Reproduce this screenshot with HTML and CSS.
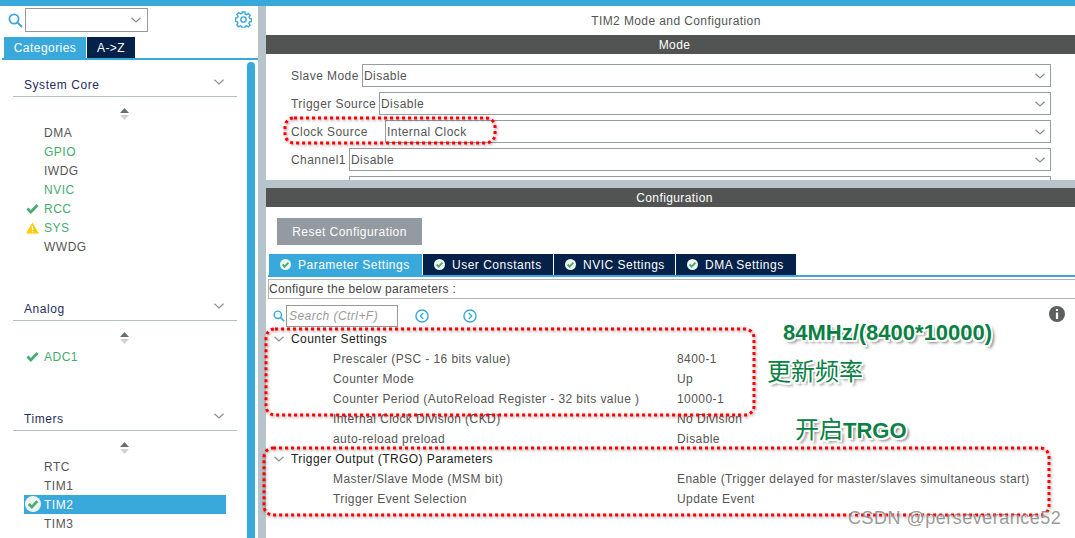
FILE: index.html
```html
<!DOCTYPE html>
<html lang="en">
<head>
<meta charset="utf-8">
<title>TIM2 Mode and Configuration</title>
<link rel="stylesheet" href="styles.css">
</head>
<body>
<svg class="defs" width="0" height="0" aria-hidden="true">
  <symbol id="chev" viewBox="0 0 10 6"><path d="M.5.8 5 5 9.500.8" fill="none" stroke="#8b8f92" stroke-width="1.200"/></symbol>
  <symbol id="check" viewBox="0 0 14 12"><path d="M1.500 6 5.200 9.800 12.500 2.200" fill="none" stroke="#45ad6e" stroke-width="3"/></symbol>
  <symbol id="okc" viewBox="0 0 12 12"><circle cx="6" cy="6" r="6" fill="#eef5f0"/><path d="M2.800 6 5.100 8.300 9.200 3.900" fill="none" stroke="#45ad6e" stroke-width="2"/></symbol>
  <symbol id="sort" viewBox="0 0 9 12"><path d="M4.500 0 9 5H0z" fill="#6b6f72"/><path d="M0 7h9L4.500 12z" fill="#cfd2d4"/></symbol>
  <symbol id="mag" viewBox="0 0 15 15"><circle cx="6" cy="6" r="4.600" fill="none" stroke="#39a9dc" stroke-width="1.800"/><path d="M9.500 9.500 14 14" stroke="#39a9dc" stroke-width="2"/></symbol>
</svg>
<div class="topbar"></div>
<main class="main">
  <aside class="left">
    <div class="searchrow">
      <svg class="mag"><use href="#mag"/></svg>
      <div class="combo"><svg class="chev"><use href="#chev"/></svg></div>
      <svg class="gear" viewBox="0 0 18 18"><path d="M7.600 1h2.800l.4 2.100 1.500.7 1.800-1.200 2 2-1.200 1.800.6 1.500 2 .5v2.800l-2 .4-.7 1.500 1.200 1.800-2 2-1.800-1.200-1.500.6-.4 2H7.600l-.4-2-1.500-.7-1.800 1.200-2-2 1.200-1.800-.6-1.500-2-.4V7.400l2-.4.700-1.500-1.200-1.800 2-2 1.800 1.200 1.500-.6z" fill="none" stroke="#39a9dc" stroke-width="1.500"/><circle cx="9" cy="9" r="2.800" fill="none" stroke="#39a9dc" stroke-width="1.500"/></svg>
    </div>
    <div class="ltabs">
      <div class="ltab ltab-on">Categories</div>
      <div class="ltab ltab-off">A-&gt;Z</div>
    </div>
    <div class="catbody">
      <div class="catlist">
        <section class="cat">
          <div class="cathead"><span>System Core</span><svg class="chev"><use href="#chev"/></svg></div>
          <div class="sortrow"><svg class="sort"><use href="#sort"/></svg></div>
          <div class="item">DMA</div>
          <div class="item ok">GPIO</div>
          <div class="item">IWDG</div>
          <div class="item ok">NVIC</div>
          <div class="item ok"><svg class="ic-check"><use href="#check"/></svg>RCC</div>
          <div class="item ok"><svg class="ic-warn" viewBox="0 0 14 12"><path d="M7 0 14 12H0z" fill="#fc0"/><path d="M6.300 3.500h1.400v4.800H6.300zM6.300 9.200h1.400v1.400H6.300z" fill="#fff"/></svg>SYS</div>
          <div class="item">WWDG</div>
        </section>
        <section class="cat">
          <div class="cathead"><span>Analog</span><svg class="chev"><use href="#chev"/></svg></div>
          <div class="sortrow"><svg class="sort"><use href="#sort"/></svg></div>
          <div class="item ok"><svg class="ic-check"><use href="#check"/></svg>ADC1</div>
        </section>
        <section class="cat">
          <div class="cathead"><span>Timers</span><svg class="chev"><use href="#chev"/></svg></div>
          <div class="sortrow"><svg class="sort"><use href="#sort"/></svg></div>
          <div class="item">RTC</div>
          <div class="item">TIM1</div>
          <div class="item sel"><svg class="ic-okc"><use href="#okc"/></svg>TIM2</div>
          <div class="item">TIM3</div>
          <div class="item">TIM4</div>
        </section>
      </div>
      <div class="vscroll"></div>
    </div>
  </aside>
  <div class="right">
    <section class="mode">
      <div class="title">TIM2 Mode and Configuration</div>
      <div class="bar">Mode</div>
      <div class="moderows">
        <div class="mrow"><label class="mlabel w-slave">Slave Mode</label><div class="msel">Disable<svg class="chev"><use href="#chev"/></svg></div></div>
        <div class="mrow"><label class="mlabel w-trig">Trigger Source</label><div class="msel">Disable<svg class="chev"><use href="#chev"/></svg></div></div>
        <div class="mrow"><label class="mlabel w-clock">Clock Source</label><div class="msel">Internal Clock<svg class="chev"><use href="#chev"/></svg></div></div>
        <div class="mrow"><label class="mlabel w-chan">Channel1</label><div class="msel">Disable<svg class="chev"><use href="#chev"/></svg></div></div>
        <div class="mrow"><label class="mlabel w-chan"></label><div class="msel"></div></div>
      </div>
    </section>
    <section class="config">
      <div class="bar">Configuration</div>
      <div class="resetwrap"><button class="reset">Reset Configuration</button></div>
      <div class="ctabs">
        <div class="ctab ctab-on t1"><svg class="ic-okc"><use href="#okc"/></svg>Parameter Settings</div>
        <div class="ctab t2"><svg class="ic-okc"><use href="#okc"/></svg>User Constants</div>
        <div class="ctab t3"><svg class="ic-okc"><use href="#okc"/></svg>NVIC Settings</div>
        <div class="ctab t4"><svg class="ic-okc"><use href="#okc"/></svg>DMA Settings</div>
      </div>
      <div class="hint">Configure the below parameters :</div>
      <div class="tools">
        <svg class="mag2"><use href="#mag"/></svg>
        <div class="psearch">Search (Ctrl+F)</div>
        <svg class="nav" viewBox="0 0 12 12"><circle cx="6" cy="6" r="5.200" fill="none" stroke="#39a9dc" stroke-width="1.200"/><path d="M7 3.500 4.600 6 7 8.500" fill="none" stroke="#39a9dc" stroke-width="1.200"/></svg>
        <svg class="nav nav2" viewBox="0 0 12 12"><circle cx="6" cy="6" r="5.200" fill="none" stroke="#39a9dc" stroke-width="1.200"/><path d="M5 3.500 7.400 6 5 8.500" fill="none" stroke="#39a9dc" stroke-width="1.200"/></svg>
        <svg class="info" viewBox="0 0 16 16"><circle cx="8" cy="8" r="8" fill="#5c5e60"/><path d="M6.900 3h2.200v2.100H6.900zM6.900 6.500h2.200V13H6.900z" fill="#fff"/></svg>
      </div>
      <div class="params">
        <div class="grp"><svg class="gchev"><use href="#chev"/></svg>Counter Settings</div>
        <div class="prow"><span>Prescaler (PSC - 16 bits value)</span><span>8400-1</span></div>
        <div class="prow"><span>Counter Mode</span><span>Up</span></div>
        <div class="prow"><span>Counter Period (AutoReload Register - 32 bits value )</span><span>10000-1</span></div>
        <div class="prow"><span>Internal Clock Division (CKD)</span><span>No Division</span></div>
        <div class="prow"><span>auto-reload preload</span><span>Disable</span></div>
        <div class="grp"><svg class="gchev"><use href="#chev"/></svg>Trigger Output (TRGO) Parameters</div>
        <div class="prow"><span>Master/Slave Mode (MSM bit)</span><span>Enable (Trigger delayed for master/slaves simultaneous start)</span></div>
        <div class="prow"><span>Trigger Event Selection</span><span>Update Event</span></div>
      </div>
    </section>
  </div>
</main>
<svg class="marks" width="1075" height="538" aria-hidden="true">
  <defs><filter id="sh" x="-5%" y="-20%" width="110%" height="140%"><feDropShadow dx="1" dy="1" stdDeviation="1.500" flood-color="#000" flood-opacity=".45"/></filter></defs>
  <g fill="none" stroke="#f00" stroke-width="3" stroke-dasharray="3 3" filter="url(#sh)">
    <rect x="285" y="118" width="210" height="25" rx="9"/>
    <rect x="266" y="329" width="488" height="86" rx="9"/>
    <rect x="264" y="448" width="785" height="67" rx="9"/>
  </g>
</svg>
<div class="note n1">84MHz/(8400*10000)</div>
<div class="note n2 cjk">更新频率</div>
<div class="note n3"><span class="cjk">开启</span>TRGO</div>
<div class="wm">CSDN @perseverance52</div>
</body>
</html>
```
FILE: styles.css
```css
* { box-sizing: border-box; }
html, body { margin: 0; padding: 0; }
body {
  width: 1075px; height: 538px; overflow: hidden; position: relative;
  font: 12px/1 "Liberation Sans", Arial, sans-serif;
  letter-spacing: .45px; color: #555; background: #fff;
}
.defs { position: absolute; }
.topbar { height: 6px; background: #39a9dc; }
.main { display: flex; height: 532px; background: #b8c4cb; }

/* left */
.left { width: 258px; background: #fff; display: flex; flex-direction: column; }
.searchrow { height: 31px; display: flex; align-items: flex-start; padding-top: 2px; position: relative; }
.mag { width: 15px; height: 15px; margin: 5px 2px 0 8px; }
.combo { width: 123px; height: 24px; border: 1px solid #999; display: flex; align-items: center; justify-content: flex-end; padding-right: 6px; }
.chev { width: 10px; height: 6px; flex: none; }
.gear { width: 17px; height: 17px; margin: 3px 0 0 87px; }
.ltabs { display: flex; padding-left: 4px; height: 21px; gap: 1px; }
.ltab { display: flex; align-items: center; justify-content: center; color: #fff; }
.ltab-on { width: 82px; background: #39a9dc; }
.ltab-off { width: 48px; background: #042149; }
.catbody { flex: 1; margin-left: 2px; border-top: 2px solid #39a9dc; display: flex; overflow: hidden; min-height: 0; }
.catlist { width: 245px; padding-left: 11px; padding-top: 13px; overflow: hidden; }
.vscroll { width: 8px; margin-top: 2px; background: #39a9dc; border-radius: 5px 5px 0 0; }
.cat + .cat { margin-top: 41px; }
.cathead { width: 224px; height: 24px; border-bottom: 1px solid #b4c0c8; display: flex; justify-content: space-between; align-items: center; padding: 0 13px 0 11px; color: #1f2d5c; letter-spacing: .55px; }
.cathead .chev { margin-top: -5px; }
.sortrow { width: 223px; height: 26px; display: flex; justify-content: center; padding-top: 11px; }
.sort { width: 9px; height: 12px; }
.item { height: 19px; width: 202px; margin-left: 11px; padding-left: 20px; display: flex; align-items: center; color: #555; position: relative; letter-spacing: .5px; }
.item.ok { color: #45ad6e; }
.item.sel { background: #39a9dc; color: #fff; }
.ic-check { position: absolute; left: 2px; top: 4px; width: 13px; height: 11px; }
.ic-warn { position: absolute; left: 2px; top: 4px; width: 13px; height: 12px; }
.item .ic-okc { position: absolute; left: 1px; top: 1px; width: 16px; height: 16px; }

/* right */
.right { width: 809px; margin-left: 8px; display: flex; flex-direction: column; }
.mode { height: 174px; background: #fff; overflow: hidden; margin-bottom: 8px; flex: none; }
.title { height: 29px; display: flex; align-items: center; justify-content: center; padding-left: 11px; color: #555; letter-spacing: .4px; }
.bar { height: 19px; background: #525453; color: #fff; display: flex; align-items: center; justify-content: center; padding-left: 8px; letter-spacing: .4px; }
.moderows { padding: 10px 24px 0 25px; display: flex; flex-direction: column; gap: 5px; }
.mrow { display: flex; height: 23px; flex: none; align-items: center; }
.mlabel { flex: none; }
.w-slave { width: 71px; }
.w-trig { width: 88px; }
.w-clock { width: 94px; }
.w-chan { width: 58px; }
.msel { flex: 1; height: 23px; border: 1px solid #969ca1; display: flex; align-items: center; justify-content: space-between; padding: 0 5px 0 1px; }
.config { flex: 1; background: #fff; min-height: 0; overflow: hidden; }
.resetwrap { padding: 11px 0 9px 11px; height: 47px; }
.reset { width: 145px; height: 27px; border: 0; background: #939aa1; color: #fff; font: inherit; letter-spacing: inherit; padding: 0; display: block; }
.ctabs { display: flex; gap: 1px; height: 21px; padding-left: 3px; }
.ctab { background: #042149; color: #fff; display: flex; align-items: center; padding-left: 11px; gap: 7px; letter-spacing: .5px; }
.ctab .ic-okc { width: 11px; height: 11px; flex: none; }
.ctab-on { background: #39a9dc; }
.t1 { width: 153px; } .t2 { width: 130px; } .t3 { width: 121px; } .t4 { width: 120px; }
.hint { position: relative; display: block; height: 25px; margin-left: 2px; border-top: 2px solid #39a9dc; padding: 3px 0 0 1px; line-height: 19px; color: #444; letter-spacing: .3px; }
.hint::before { content: ""; position: absolute; inset: 2px 0 1px 0; border: 1px solid #b0b4b7; border-right: 0; }
.tools { height: 29px; display: flex; align-items: center; padding-left: 7px; padding-top: 2px; position: relative; }
.mag2 { width: 12px; height: 12px; margin-right: 1px; }
.psearch { width: 112px; height: 22px; border: 1px solid #999; line-height: 20px; padding-left: 2px; font-style: italic; color: #9a9a9a; margin-right: 17px; }
.nav { width: 14px; height: 14px; }
.nav2 { margin-left: 34px; }
.info { width: 16px; height: 16px; position: absolute; right: 10px; top: 6px; }
.grp { height: 20px; display: flex; align-items: center; padding-left: 8px; color: #222; letter-spacing: .43px; }
.gchev { width: 10px; height: 6px; margin-right: 7px; }
.prow { height: 20px; display: flex; align-items: center; padding-left: 67px; color: #555; letter-spacing: .42px; }
.prow span:first-child { width: 344px; flex: none; }

/* annotations */
.marks { position: absolute; left: 0; top: 0; pointer-events: none; }
.note { position: absolute; color: #0a8044; font-weight: bold; white-space: nowrap; letter-spacing: 0;
  text-shadow: 1.5px 0 0 #fff, -1.5px 0 0 #fff, 0 1.5px 0 #fff, 0 -1.5px 0 #fff, 1.5px 1.5px 0 #fff, -1.5px -1.5px 0 #fff, 1.5px -1.5px 0 #fff, -1.5px 1.5px 0 #fff, 3px 3px 3px #777; }
.cjk { font-family: "Noto Sans CJK SC", sans-serif; font-weight: 400; }
.n1 { left: 783px; top: 321px; font-size: 22px; line-height: 24px; }
.n2 { left: 767px; top: 356px; font-size: 24px; line-height: 28px; }
.n3 { left: 795px; top: 414px; font-size: 22px; line-height: 28px; }
.n3 .cjk { font-size: 24px; }
.wm { position: absolute; left: 848px; top: 508px; font-size: 18px; line-height: 20px; letter-spacing: .5px; color: rgba(120,120,120,.75); text-shadow: 1px 1px 0 rgba(255,255,255,.7); white-space: nowrap; }
```
